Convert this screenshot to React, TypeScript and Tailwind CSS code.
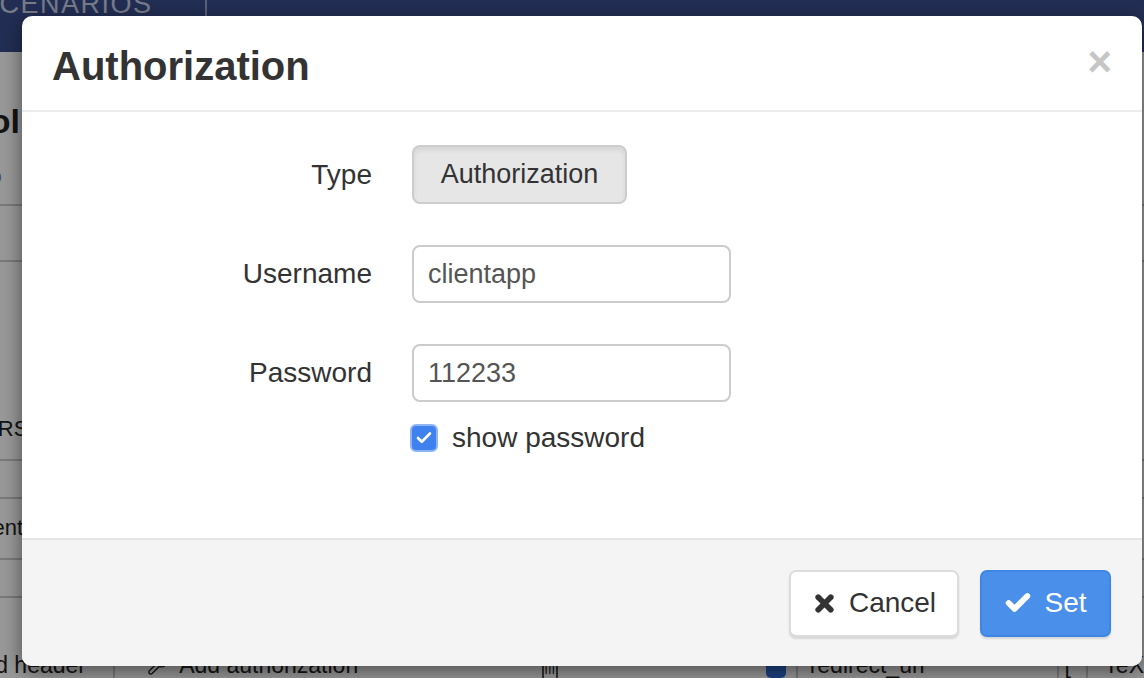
import React, { useState } from 'react';
import { Check, X, Wrench } from 'lucide-react';

const font = { fontFamily: '"Liberation Sans", Arial, sans-serif' };

function BackgroundPage() {
  return (
    <div className="flex h-[678px] w-full flex-col overflow-hidden bg-white text-[#222]">
      <div className="flex h-[52px] shrink-0 items-start bg-[#3b4e8e]">
        <div className="-ml-[20px] -mt-[16px] w-[227px] whitespace-nowrap border-r-2 border-[#9aa4c4] pb-[26px] text-[27px] tracking-[1.5px] text-[#c9d0e6]">
          SCENARIOS
        </div>
      </div>
      <div className="flex flex-1 flex-col overflow-hidden">
        <div className="-ml-[118px] mt-[44px] whitespace-nowrap text-[34px] font-bold">Protocol</div>
        <div className="-ml-[20px] mt-[14px] text-[22px] text-[#777]">ID</div>
        <div className="mt-[10px] h-[58px] border-y-2 border-[#ccc]" />
        <div className="h-[150px]" />
        <div className="-ml-[78px] whitespace-nowrap text-[22px]">HEADERS</div>
        <div className="mt-[14px] h-[40px] border-y-2 border-[#ccc]" />
        <div className="-ml-[54px] mt-[12px] whitespace-nowrap text-[22px]">Content</div>
        <div className="mt-[14px] h-[40px] border-y-2 border-[#ccc]" />
        <div className="-ml-[104px] -mt-[34px] whitespace-nowrap text-[22px]">Method</div>
      </div>
      <div className="flex h-[26px] shrink-0 items-end whitespace-nowrap text-[23px] leading-[26px]">
        <div className="-ml-[102px] w-[219px] overflow-hidden border-r-2 border-[#ccc]">Authorized header</div>
        <div className="flex w-[430px] items-center gap-[10px] pl-[32px]">
          <Wrench size={22} strokeWidth={1.5} />
          <span>Add authorization</span>
        </div>
        <div className="flex h-[24px] w-[16px] items-center justify-center border-x-2 border-[#555] text-[14px]">|||</div>
        <div className="w-[200px] border-r-2 border-[#ccc]" />
        <div className="flex w-[40px] items-end justify-center">
          <span className="h-[20px] w-[20px] rounded-[5px] bg-[#2f6fd9]" />
        </div>
        <div className="w-[265px] border-x-2 border-[#ccc] pl-[12px]">redirect_uri</div>
        <div className="w-[30px] border-r-2 border-[#ccc] pl-[6px]">[</div>
        <div className="pl-[16px]">TeX</div>
      </div>
    </div>
  );
}

export default function App() {
  const [show, setShow] = useState(true);

  return (
    <div className="relative h-[678px] w-[1144px] overflow-hidden" style={font}>
      <BackgroundPage />
      <div className="absolute inset-0 bg-black/40" />

      <div className="absolute left-[22px] top-[16px] flex h-[650px] w-[1120px] flex-col overflow-hidden rounded-[10px] bg-white shadow-[0_5px_20px_rgba(0,0,0,0.5)]">
        <div className="flex h-[96px] shrink-0 items-center justify-between border-b-2 border-[#ececec] pl-[30px] pr-[30px] pt-[6px]">
          <h4 className="text-[40px] font-bold text-[#333]">Authorization</h4>
          <button className="mt-[-8px] text-[42px] font-bold leading-none text-[#c6c6c6]">×</button>
        </div>

        <div className="flex flex-1 flex-col pt-[33px]">
          <div className="grid grid-cols-[350px_1fr] items-center gap-x-[40px] gap-y-[41px]">
            <label className="text-right text-[28px] text-[#333]">Type</label>
            <div>
              <button className="h-[59px] w-[215px] rounded-[8px] border-2 border-[#cdcdcd] bg-[#e6e6e6] text-[27px] text-[#333] shadow-[inset_0_3px_5px_rgba(0,0,0,0.08)]">
                Authorization
              </button>
            </div>

            <label className="text-right text-[28px] text-[#333]">Username</label>
            <input
              defaultValue="clientapp"
              className="h-[58px] w-[319px] rounded-[8px] border-2 border-[#cccccc] px-[14px] text-[27px] text-[#555] outline-none"
            />

            <label className="text-right text-[28px] text-[#333]">Password</label>
            <input
              type={show ? 'text' : 'password'}
              defaultValue="112233"
              className="h-[58px] w-[319px] rounded-[8px] border-2 border-[#cccccc] px-[14px] text-[27px] text-[#555] outline-none"
            />
          </div>
          <div className="ml-[388px] mt-[15px] flex items-center gap-[14px]">
            <button
              onClick={() => setShow(!show)}
              className="flex h-[28px] w-[28px] items-center justify-center rounded-[6px] border-2 border-[#8fb4f2] bg-[#3f82ef] text-white"
            >
              {show && <Check size={18} strokeWidth={3.5} />}
            </button>
            <span className="text-[28px] text-[#333]">show password</span>
          </div>
        </div>

        <div className="flex h-[128px] shrink-0 items-center justify-end gap-[21px] border-t-2 border-[#e5e5e5] bg-[#f4f4f4] pr-[31px]">
          <button className="flex h-[67px] w-[170px] items-center justify-center gap-[12px] rounded-[7px] border-2 border-[#dcdcdc] bg-white text-[28px] text-[#333] shadow-[0_2px_2px_rgba(0,0,0,0.12)]">
            <X size={25} strokeWidth={5.5} />
            Cancel
          </button>
          <button className="flex h-[67px] w-[131px] items-center justify-center gap-[12px] rounded-[7px] border-2 border-[#3f86e4] bg-[#4a90eb] text-[28px] text-white shadow-[0_2px_2px_rgba(0,0,0,0.12)]">
            <Check size={28} strokeWidth={5} />
            Set
          </button>
        </div>
      </div>
    </div>
  );
}
